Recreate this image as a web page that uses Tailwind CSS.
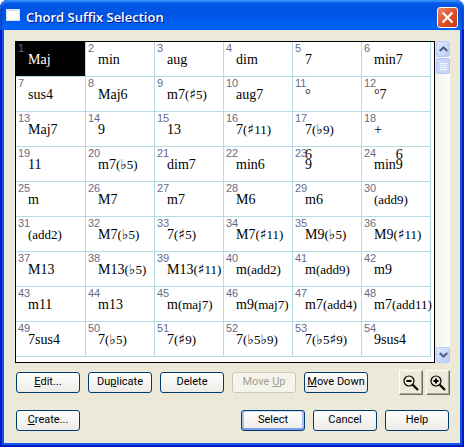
<!DOCTYPE html>
<html lang="en">
<head>
<meta charset="utf-8">
<title>Chord Suffix Selection</title>
<script src="https://cdn.jsdelivr.net/npm/@tailwindcss/browser@4"></script>
</head>
<body class="bg-white">
<main class="flex min-h-screen flex-col rounded-t-lg border-x-2 border-b-2 border-[#0019c4] bg-[#ece9d8] font-[Roboto,sans-serif] text-[11px] text-black">
  <header class="-mx-0.5 flex h-[30px] shrink-0 items-center gap-1.5 rounded-t-lg bg-linear-to-b from-[#0058e6] via-[#0054e3] to-[#0066ff] px-1.5 shadow-[inset_0_2px_2px_#3a93ff,inset_2px_0_1px_#0038c8,inset_-2px_0_1px_#0038c8]">
    <span class="h-[12px] w-[14px] border border-t-2 border-[#d8e4f8] bg-[#fffef6]"></span>
    <h1 class="mt-1 grow font-['Open_Sans',sans-serif] text-[13px] leading-4 font-semibold text-white [text-shadow:1px_1px_#0f1089]">Chord Suffix Selection</h1>
    <button type="button" aria-label="Close" class="mt-1 flex size-[21px] items-center justify-center rounded-[3px] border border-white bg-linear-to-br from-[#e9866a] via-[#e2502a] to-[#c03a12]">
      <svg class="size-[13px]" viewBox="0 0 13 13" stroke="#fff" stroke-width="2.2" fill="none"><path d="M1.5 1.5 11.5 11.5M11.5 1.5 1.5 11.5"/></svg>
    </button>
  </header>

  <div class="flex grow flex-col border-x-2 border-b-2 border-[#0f57ea] pt-[11px] pr-[10px] pb-3 pl-[11px]">
    <div class="flex">
      <div class="h-[322px] grow overflow-hidden border border-black bg-white">
        <table class="w-[415px] table-fixed border-separate border-spacing-0">
          <colgroup><col class="w-[70px]"><col><col><col><col><col></colgroup>
          <tbody id="suffixes"></tbody>
        </table>
      </div>
      <div class="ml-px flex w-[14px] flex-col justify-between bg-linear-to-r from-[#f3f1ec] to-[#fefefb]">
        <div class="flex flex-col gap-px">
          <button type="button" aria-label="Scroll up" class="flex h-4 items-center justify-center rounded-[2px] border border-[#b6c8f4] bg-linear-to-br from-[#e1eafe] to-[#b9cbf7]">
            <svg class="h-[6px] w-[9px]" viewBox="0 0 9 6" fill="none" stroke="#4d6185" stroke-width="2"><path d="M.7 5 4.5 1.4 8.3 5"/></svg>
          </button>
          <div class="flex h-4 flex-col items-center justify-center gap-px rounded-[2px] border border-[#b6c8f4] bg-[#c8d6fb]">
            <span class="h-px w-[7px] bg-[#f6f9fe]"></span><span class="h-px w-[7px] bg-[#f6f9fe]"></span><span class="h-px w-[7px] bg-[#f6f9fe]"></span><span class="h-px w-[7px] bg-[#f6f9fe]"></span>
          </div>
        </div>
        <button type="button" aria-label="Scroll down" class="flex h-4 items-center justify-center rounded-[2px] border border-[#b6c8f4] bg-linear-to-br from-[#e1eafe] to-[#b9cbf7]">
          <svg class="h-[6px] w-[9px]" viewBox="0 0 9 6" fill="none" stroke="#4d6185" stroke-width="2"><path d="M.7 1 4.5 4.6 8.3 1"/></svg>
        </button>
      </div>
    </div>

    <div class="mt-[7px] flex items-center gap-2 pl-px">
      <button type="button" class="h-[21px] w-16 rounded-[3px] border border-[#003c74] bg-linear-to-b from-white to-[#ecebe6]"><u>E</u>dit...</button>
      <button type="button" class="h-[21px] w-16 rounded-[3px] border border-[#003c74] bg-linear-to-b from-white to-[#ecebe6]">Du<u>p</u>licate</button>
      <button type="button" class="h-[21px] w-16 rounded-[3px] border border-[#003c74] bg-linear-to-b from-white to-[#ecebe6]">Delete</button>
      <button type="button" disabled class="h-[21px] w-16 rounded-[3px] border border-[#c9c7ba] bg-[#f5f4ea] text-[#a1a192]">Move <u>U</u>p</button>
      <button type="button" class="h-[21px] w-16 rounded-[3px] border border-[#003c74] bg-linear-to-b from-white to-[#ecebe6] whitespace-nowrap"><u>M</u>ove Down</button>
      <div class="ml-auto flex gap-[3px]">
        <button type="button" aria-label="Zoom out" class="flex h-[25px] w-6 items-center justify-center border border-t-white border-r-[#716f64] border-b-[#716f64] border-l-white shadow-[inset_-1px_-1px_#aca899]">
          <svg class="size-[18px]" viewBox="0 0 18 18" fill="none" stroke="#000"><circle cx="7" cy="7" r="5" stroke-width="1.2"/><path d="M4.5 7h5" stroke-width="2"/><path d="M10.5 10.5 16 16" stroke-width="2.2"/></svg>
        </button>
        <button type="button" aria-label="Zoom in" class="flex h-[25px] w-6 items-center justify-center border border-t-white border-r-[#716f64] border-b-[#716f64] border-l-white shadow-[inset_-1px_-1px_#aca899]">
          <svg class="size-[18px]" viewBox="0 0 18 18" fill="none" stroke="#000"><circle cx="7" cy="7" r="5" stroke-width="1.2"/><path d="M4.5 7h5M7 4.5v5" stroke-width="2"/><path d="M10.5 10.5 16 16" stroke-width="2.2"/></svg>
        </button>
      </div>
    </div>

    <div class="mt-[15px] flex gap-2 px-px">
      <button type="button" class="mr-auto h-[21px] w-16 rounded-[3px] border border-[#003c74] bg-linear-to-b from-white to-[#ecebe6]"><u>C</u>reate...</button>
      <button type="button" class="h-[21px] w-16 rounded-[3px] border border-[#003c74] bg-linear-to-b from-white to-[#ecebe6] shadow-[inset_0_-2px_#7f9fe6,inset_2px_0_#a9c0f0,inset_-2px_0_#a9c0f0,inset_0_1px_#cfddf8]">Select</button>
      <button type="button" class="h-[21px] w-16 rounded-[3px] border border-[#003c74] bg-linear-to-b from-white to-[#ecebe6]">Cancel</button>
      <button type="button" class="h-[21px] w-16 rounded-[3px] border border-[#003c74] bg-linear-to-b from-white to-[#ecebe6]">Help</button>
    </div>
  </div>
</main>

<script>
const suffixes = [
  'Maj', 'min', 'aug', 'dim', '7', 'min7',
  'sus4', 'Maj6', 'm7(♯5)', 'aug7', '°', '°7',
  'Maj7', '9', '13', '7(♯11)', '7(♭9)', '+',
  '11', 'm7(♭5)', 'dim7', 'min6', '6/9', 'min6/9',
  'm', 'M7', 'm7', 'M6', 'm6', '(add9)',
  '(add2)', 'M7(♭5)', '7(♯5)', 'M7(♯11)', 'M9(♭5)', 'M9(♯11)',
  'M13', 'M13(♭5)', 'M13(♯11)', 'm(add2)', 'm(add9)', 'm9',
  'm11', 'm13', 'm(maj7)', 'm9(maj7)', 'm7(add4)', 'm7(add11)',
  '7sus4', '7(♭5)', '7(♯9)', '7(♭5♭9)', '7(♭5♯9)', '9sus4'
];

// Alterations in parentheses are set smaller; "6/9" is stacked.
const format = s => s
  .replace('6/9', `<span class="-mt-[10px] inline-block leading-[10px]"><span class="block">6</span><span class="block">9</span></span>`)
  .replace(/\(.*\)/, m => `<span class="text-[13px] leading-none">${m}</span>`)
  .replace(/[♯♭]/g, m => `<span class="font-['DejaVu_Sans',sans-serif] text-[14px] leading-none">${m}</span>`);

const body = document.getElementById('suffixes');
suffixes.forEach((suffix, i) => {
  const row = i % 6 ? body.lastElementChild : body.insertRow();
  const cell = row.insertCell();
  cell.className = i ? 'border-r border-b border-[#b7dbe4] p-0' : 'border-r border-b border-[#b7dbe4] bg-black p-0 text-white';
  cell.innerHTML = `
    <div class="relative h-[34px] pt-[9px] pl-[12px] whitespace-nowrap">
      <span class="absolute top-0 left-[2px] font-['Liberation_Sans',sans-serif] text-[11px] leading-3 text-[#6b6b85]">${i + 1}</span>
      <div class="font-['Liberation_Serif',serif] text-[14px] leading-[18px]">${format(suffix)}</div>
    </div>`;
});
</script>
</body>
</html>
